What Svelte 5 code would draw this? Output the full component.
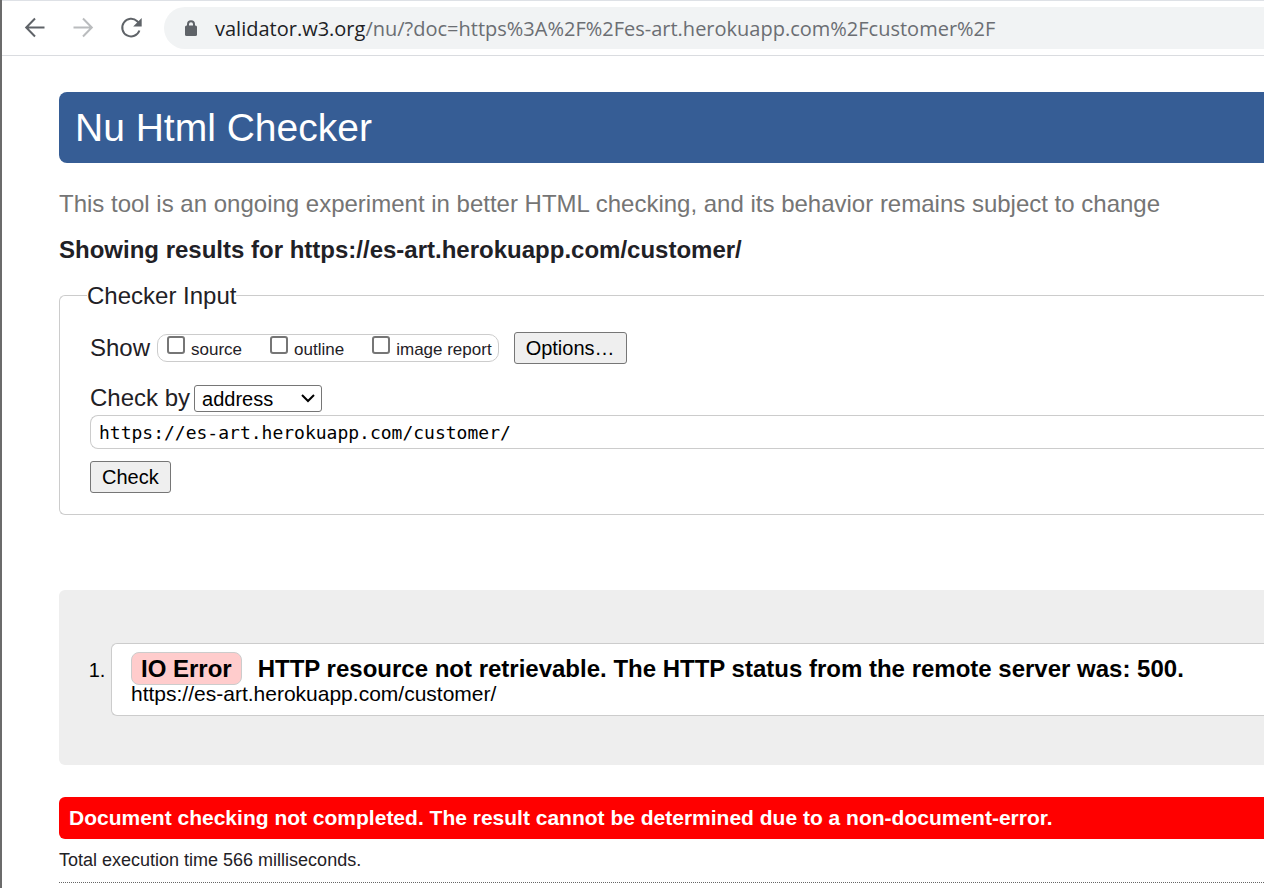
<script>
  const address = 'https://es-art.herokuapp.com/customer/';
  const views = [
    { id: 'source', label: 'source' },
    { id: 'outline', label: 'outline' },
    { id: 'image', label: 'image report' }
  ];
  let documentUrl = $state(address);
  let method = $state('address');
</script>

<div class="window">
  <header class="toolbar">
    <button class="nav" aria-label="Back">
      <svg viewBox="0 0 24 24"><path d="M21.500 11.500H3.500M12 2.500L3.200 11.500l8.800 9" /></svg>
    </button>
    <button class="nav muted" aria-label="Forward">
      <svg viewBox="0 0 24 24"><path d="M2.500 11.500H20.500M12 2.500l8.800 9-8.800 9" /></svg>
    </button>
    <button class="nav" aria-label="Reload">
      <svg viewBox="0 0 24 24"><path d="M20.400 14.500A8.800 8.800 0 1 1 18.200 5.300L20 7.100" /><path class="solid" d="M22.700 2v8.500h-8.500z" /></svg>
    </button>
    <div class="location">
      <svg class="lock" viewBox="0 0 12 16"><path d="M3 7V4.200a3 3 0 0 1 6 0V7" /><rect x="0" y="5.500" width="12" height="10.500" rx="1.500" /></svg>
      <span class="url"><b>validator.w3.org</b>/nu/?doc=https%3A%2F%2Fes-art.herokuapp.com%2Fcustomer%2F</span>
    </div>
  </header>

  <main>
    <h1>Nu Html Checker</h1>
    <p class="intro">This tool is an ongoing experiment in better HTML checking, and its behavior remains subject to change</p>
    <h2>Showing results for {address}</h2>

    <form onsubmit={(e) => e.preventDefault()}>
      <fieldset>
        <legend>Checker Input</legend>
        <div class="show">
          <span class="name">Show</span>
          <div class="views">
            {#each views as view}
              <label for={view.id}><input type="checkbox" id={view.id} /><span>{view.label}</span></label>
            {/each}
          </div>
          <button type="button">Options…</button>
        </div>
        <div class="by">
          <label class="name" for="method">Check by</label>
          <span class="picker">
            <select id="method" bind:value={method}>
              <option value="address">address</option>
              <option value="upload">file upload</option>
              <option value="text">text input</option>
            </select>
            <svg viewBox="0 0 14 10"><path d="M1 2L7 8 13 2" /></svg>
          </span>
        </div>
        <input class="doc" type="text" aria-label="Document address" spellcheck="false" bind:value={documentUrl} />
        <button type="submit">Check</button>
      </fieldset>
    </form>

    <section class="results">
      <ol>
        <li>
          <p class="message"><strong class="tag">IO Error</strong><strong>HTTP resource not retrievable. The HTTP status from the remote server was: 500.</strong></p>
          <p class="where">{address}</p>
        </li>
      </ol>
    </section>

    <p class="failure">Document checking not completed. The result cannot be determined due to a non-document-error.</p>
    <p class="stats">Total execution time 566 milliseconds.</p>
    <hr />
  </main>
</div>

<style>
  :global(body) {
    margin: 0;
    background: #fff;
  }
  .window, .window * {
    box-sizing: border-box;
  }
  .window {
    border-left: 2px solid #6b6b6b;
    font-family: "Liberation Sans", Arial, sans-serif;
    color: #1f2126;
    overflow: hidden;
    padding-bottom: 5px;
  }
  .toolbar {
    display: flex;
    align-items: center;
    height: 56px;
    padding-left: 21px;
    border-top: 1px solid #dee1e6;
    border-bottom: 1px solid #dadce0;
  }
  .nav {
    flex: none;
    width: 24px;
    height: 24px;
    margin-right: 24px;
    padding: 0;
    border: 0;
    background: none;
  }
  .nav svg {
    display: block;
    width: 24px;
    height: 24px;
    fill: none;
    stroke: #5f6368;
    stroke-width: 2;
  }
  .nav.muted svg {
    stroke: #babcbe;
  }
  .nav .solid {
    fill: #5f6368;
    stroke: none;
  }
  .location {
    flex: 1;
    display: flex;
    align-items: center;
    gap: 18px;
    height: 42px;
    margin-left: -3px;
    padding-left: 21px;
    background: #f1f3f4;
    border-radius: 21px 0 0 21px;
    white-space: nowrap;
  }
  .lock {
    width: 12px;
    height: 16px;
    fill: #5f6368;
  }
  .lock path {
    fill: none;
    stroke: #5f6368;
    stroke-width: 2;
  }
  .url {
    padding-top: 2px;
    font: 20px/28px "Open Sans", "Noto Sans", sans-serif;
    color: #6b6e73;
  }
  .url b {
    font-weight: 400;
    color: #202124;
  }
  main {
    padding: 36px 0 0 57px;
  }
  h1, h2, p {
    margin: 0;
  }
  h1 {
    padding: 14px 16px 13px;
    border-radius: 8px 0 0 8px;
    background: #365d95;
    color: #fff;
    font-size: 39px;
    line-height: 44px;
    font-weight: 400;
  }
  .intro {
    margin-top: 27px;
    font-size: 24px;
    line-height: 28px;
    color: #757575;
  }
  h2 {
    margin-top: 18px;
    font-size: 24px;
    line-height: 28px;
  }
  fieldset {
    min-width: 0;
    margin: 18px 0 0;
    padding: 23px 0 21px 30px;
    border: 1px solid #ccc;
    border-right: 0;
    border-radius: 6px 0 0 6px;
  }
  legend {
    margin-left: -3px;
    padding: 0;
    font-size: 24px;
    line-height: 27px;
  }
  .show {
    display: flex;
    align-items: center;
  }
  .name {
    font-size: 24px;
    line-height: 28px;
  }
  .views {
    display: flex;
    gap: 28px;
    height: 28px;
    margin: 0 15px 0 7px;
    padding: 0 6px 0 9px;
    border: 1px solid #ccc;
    border-radius: 10px;
    font-size: 17px;
    line-height: 30px;
  }
  .views label {
    display: flex;
    gap: 6px;
  }
  .views input {
    appearance: none;
    width: 18px;
    height: 18px;
    margin: 1px 0 0;
    border: 2px solid #767676;
    border-radius: 3px;
    background: #fff;
  }
  fieldset button {
    display: block;
    height: 32px;
    padding: 0 11px;
    border: 1px solid #767676;
    border-radius: 3px;
    background: #efefef;
    color: #000;
    font: 20px/28px "Liberation Sans", Arial, sans-serif;
  }
  .by {
    display: flex;
    align-items: center;
    gap: 4px;
    margin-top: 20px;
  }
  .picker {
    display: grid;
    align-items: center;
    width: 128px;
  }
  .picker > * {
    grid-area: 1 / 1;
  }
  .picker svg {
    justify-self: end;
    width: 14px;
    height: 10px;
    margin-right: 7px;
    fill: none;
    stroke: #000;
    stroke-width: 2;
    pointer-events: none;
  }
  select {
    appearance: none;
    height: 27px;
    padding: 1px 7px 0;
    border: 1px solid #767676;
    border-radius: 3px;
    background: #fff;
    color: #000;
    font: 20px/24px "Liberation Sans", Arial, sans-serif;
  }
  .doc {
    display: block;
    width: 100%;
    height: 34px;
    margin: 3px 0 12px;
    padding: 0 8px;
    border: 1px solid #ccc;
    border-right: 0;
    border-radius: 8px 0 0 8px;
    color: #000;
    font: 18px/28px "DejaVu Sans Mono", monospace;
  }
  .results {
    margin-top: 75px;
    padding: 53px 0 49px 52px;
    border-radius: 6px 0 0 6px;
    background: #eee;
  }
  ol {
    margin: 0;
    padding: 0;
    color: #000;
    font-size: 20px;
  }
  li {
    padding: 8px 0 12px 19px;
    border: 1px solid #ccc;
    border-right: 0;
    border-radius: 6px 0 0 6px;
    background: #fff;
  }
  .message {
    font-size: 24px;
    line-height: 33px;
    white-space: nowrap;
  }
  .tag {
    display: inline-block;
    margin-right: 16px;
    padding: 0 9px;
    border: 1px solid #ccc;
    border-radius: 8px;
    background: #fcc;
    line-height: 31px;
  }
  .where {
    font-size: 21px;
    line-height: 18px;
  }
  .failure {
    margin-top: 32px;
    padding: 7px 10px;
    border-radius: 6px 0 0 6px;
    background: #f00;
    color: #fff;
    font-size: 21px;
    line-height: 28px;
    font-weight: 700;
  }
  .stats {
    margin-top: 9px;
    font-size: 18px;
    line-height: 24px;
  }
  hr {
    margin: 10px 0 0;
    border: 0;
    border-top: 1px dotted #666;
  }
</style>
